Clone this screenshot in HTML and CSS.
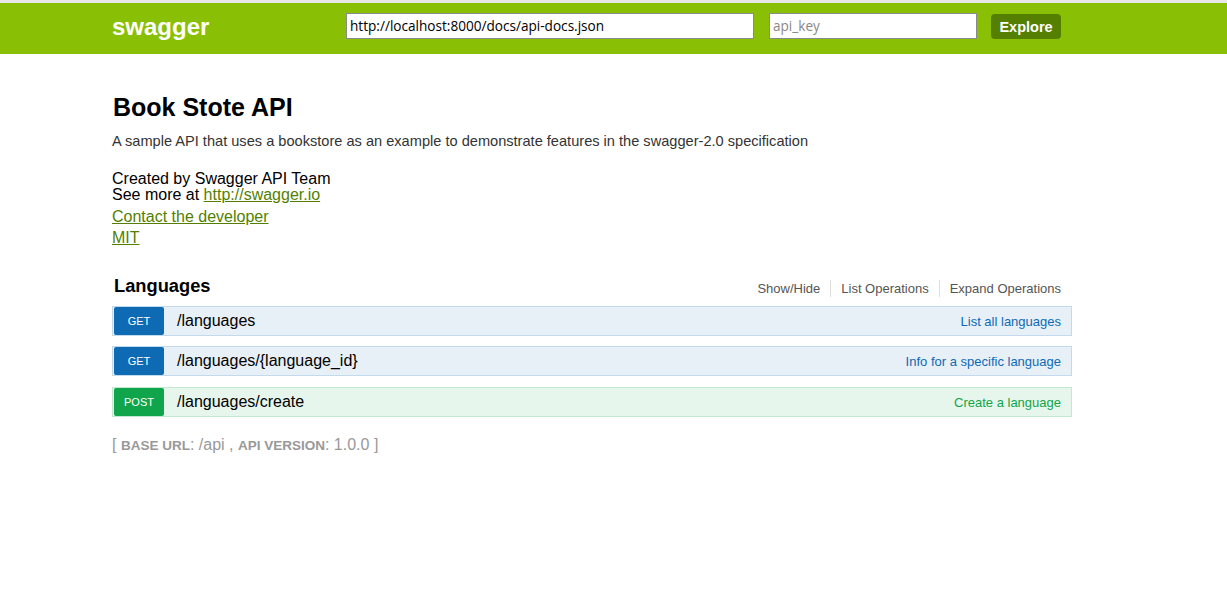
FILE: index.html
```html
<!DOCTYPE html>
<html>
<head>
<meta charset="utf-8">
<title>Swagger UI</title>
<link rel="stylesheet" href="styles.css">
</head>
<body>
<div class="header">
  <div class="header-inner">
    <a class="logo" href="#">swagger</a>
    <form class="api-selector">
      <input class="input-url" type="text" value="http://localhost:8000/docs/api-docs.json">
      <input class="input-key" type="text" placeholder="api_key">
      <a class="explore" href="#">Explore</a>
    </form>
  </div>
</div>
<div class="main">
  <h1 class="title">Book Stote API</h1>
  <div class="description">A sample API that uses a bookstore as an example to demonstrate features in the swagger-2.0 specification</div>
  <div class="contact">Created by Swagger API Team<br>See more at <a href="#">http://swagger.io</a></div>
  <div class="info-link"><a href="#">Contact the developer</a></div>
  <div class="info-link"><a href="#">MIT</a></div>

  <div class="resource-head">
    <h2 class="resource-title">Languages</h2>
    <ul class="options">
      <li>Show/Hide</li>
      <li>List Operations</li>
      <li>Expand Operations</li>
    </ul>
  </div>
  <ul class="operations">
    <li class="op get"><span class="method">GET</span><span class="path">/languages</span><span class="summary">List all languages</span></li>
    <li class="op get"><span class="method">GET</span><span class="path">/languages/{language_id}</span><span class="summary">Info for a specific language</span></li>
    <li class="op post"><span class="method">POST</span><span class="path">/languages/create</span><span class="summary">Create a language</span></li>
  </ul>
  <div class="footer">[ <span class="sc">BASE URL</span>: /api , <span class="sc">API VERSION</span>: 1.0.0 ]</div>
</div>
</body>
</html>
```

FILE: styles.css
```css
html, body {
  margin: 0;
  padding: 0;
  background: #fff;
  font-family: "Liberation Sans", Arial, sans-serif;
  color: #000;
}

.header {
  border-top: 3px solid #e6e6e6;
  background: #89bf04;
  height: 51px;
}

.header-inner {
  margin-left: 112px;
  width: 949px;
  height: 51px;
  display: flex;
  align-items: center;
  justify-content: space-between;
}

.logo {
  color: #fff;
  font-weight: bold;
  font-size: 24px;
  text-decoration: none;
  margin-top: -4px;
}

.api-selector {
  display: flex;
  align-items: center;
  margin: -6px 0 0 0;
}

.api-selector input {
  box-sizing: border-box;
  height: 26px;
  border: 1px solid #8a8a8a;
  padding: 0 3px;
  font-family: "Open Sans", "Liberation Sans", sans-serif;
  font-size: 13.6px;
  color: #000;
  background: #fff;
  outline: none;
}

.input-url {
  width: 408px;
}

.input-key {
  width: 208px;
  margin-left: 15px;
}

.input-key::placeholder {
  color: #888;
}

.explore {
  margin-left: 14px;
  width: 70px;
  height: 25px;
  box-sizing: border-box;
  background: #547f00;
  border-radius: 4px;
  color: #fff;
  font-weight: bold;
  font-size: 14.5px;
  text-decoration: none;
  display: flex;
  align-items: center;
  justify-content: center;
  margin-top: 2px;
}

.main {
  margin-left: 112px;
  width: 960px;
  padding-top: 38px;
}

.title {
  margin: 0;
  font-size: 25px;
  line-height: 30px;
  font-weight: bold;
  padding-left: 1px;
}

.description {
  margin-top: 10px;
  font-size: 14.6px;
  line-height: 18px;
  color: #333;
}

.contact {
  margin-top: 21px;
  font-size: 16px;
  line-height: 16px;
}

.info-link {
  font-size: 16px;
  line-height: 21px;
}

.contact a, .info-link a {
  color: #547f00;
  text-decoration: underline;
}

.contact + .info-link {
  margin-top: 3px;
}

.resource-head {
  margin-top: 26px;
  display: flex;
  align-items: center;
  justify-content: space-between;
  height: 24px;
}

.resource-title {
  margin: 0 0 0 2px;
  font-size: 18.3px;
  line-height: 24px;
  font-weight: bold;
}

.options {
  list-style: none;
  margin: 0 11px 0 0;
  padding: 0;
  display: flex;
  font-size: 13px;
  color: #555;
  margin-top: 4px;
}

.options li {
  padding: 0 10px;
  border-right: 1px solid #ddd;
  line-height: 17px;
}

.options li:last-child {
  border-right: none;
  padding-right: 0;
}

.operations {
  list-style: none;
  margin: 8px 0 0 0;
  padding: 0;
}

.op {
  display: flex;
  align-items: center;
  height: 28px;
  border: 1px solid;
  margin-bottom: 10px;
}

.op:nth-child(3) {
  margin-top: 11px;
}

.op .method {
  width: 50px;
  height: 28px;
  margin-left: 1px;
  border-radius: 2px;
  color: #fff;
  font-size: 11px;
  display: flex;
  align-items: center;
  justify-content: center;
}

.op .path {
  margin-left: 13px;
  font-size: 16px;
  flex: 1;
}

.op .summary {
  font-size: 13px;
  margin-right: 10px;
}

.op.get {
  background: #e7f0f7;
  border-color: #c3d9ec;
}

.op.get .method {
  background: #0f6ab4;
}

.op.get .summary {
  color: #0f6ab4;
}

.op.post {
  background: #e7f6ec;
  border-color: #c3e8d1;
}

.op.post .method {
  background: #10a54a;
}

.op.post .summary {
  color: #10a54a;
}

.footer {
  margin-top: 18px;
  font-size: 16px;
  line-height: 20px;
  color: #999;
}

.sc {
  font-size: 13.5px;
  font-weight: bold;
  color: #999;
}
```
